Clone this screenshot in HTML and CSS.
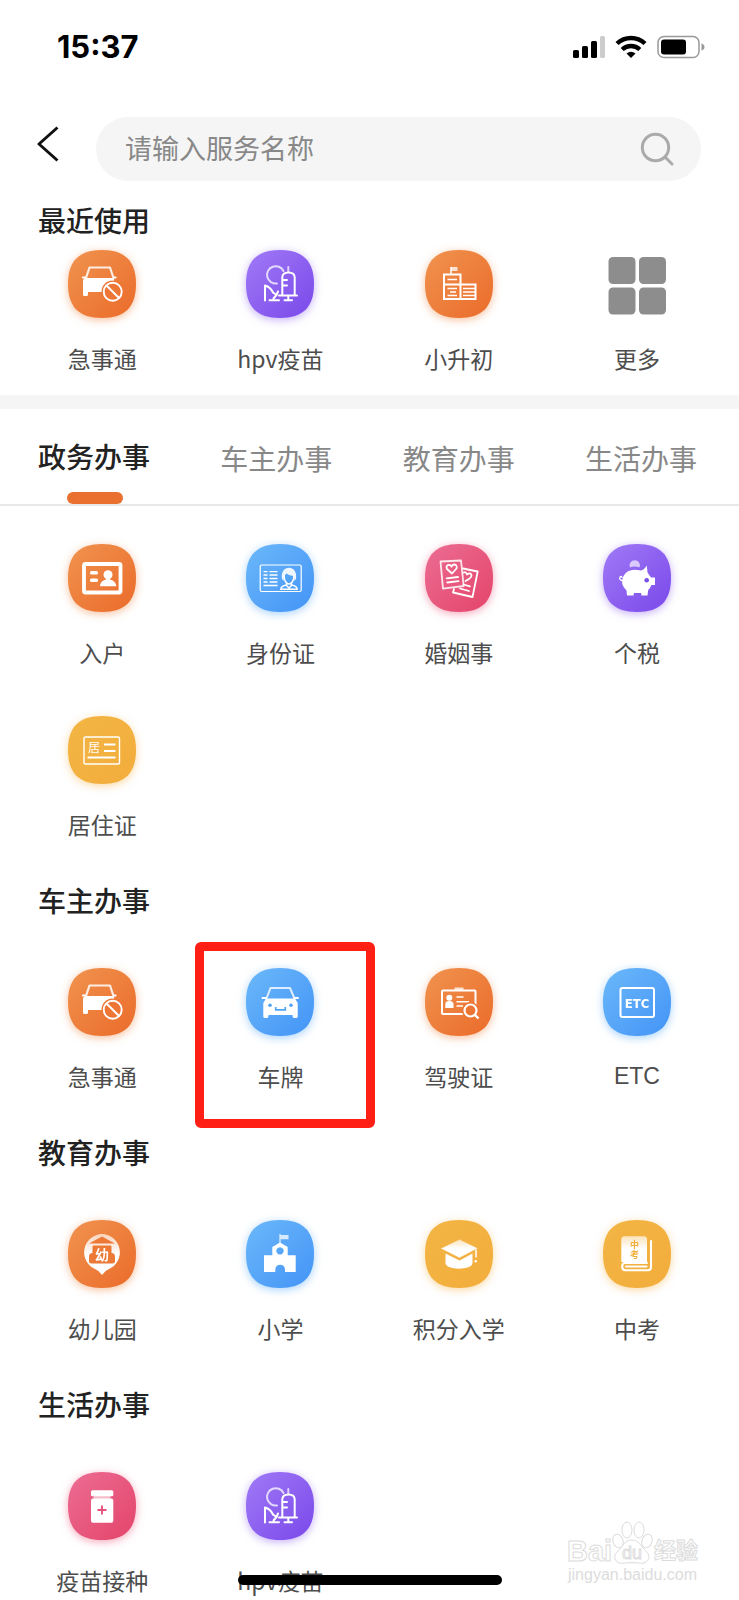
FILE: index.html
```
<!DOCTYPE html>
<html lang="zh-CN">
<head>
<meta charset="utf-8">
<meta name="viewport" content="width=device-width, initial-scale=1">
<title>服务</title>
<link rel="stylesheet" href="styles.css">
</head>
<body>
<svg class="defs" width="0" height="0" aria-hidden="true">
  <defs>
    <linearGradient id="g-orange" x1="0" y1="0" x2="1" y2="1"><stop offset="0" stop-color="#f0934f"/><stop offset="1" stop-color="#eb6b2a"/></linearGradient>
    <linearGradient id="g-purple" x1="0" y1="0" x2="1" y2="1"><stop offset="0" stop-color="#a07af6"/><stop offset="1" stop-color="#7a48ea"/></linearGradient>
    <linearGradient id="g-blue" x1="0" y1="0" x2="1" y2="1"><stop offset="0" stop-color="#6bb8f9"/><stop offset="1" stop-color="#4394f7"/></linearGradient>
    <linearGradient id="g-pink" x1="0" y1="0" x2="1" y2="1"><stop offset="0" stop-color="#ec6d93"/><stop offset="1" stop-color="#e4446a"/></linearGradient>
    <linearGradient id="g-yellow" x1="0" y1="0" x2="1" y2="1"><stop offset="0" stop-color="#f2b545"/><stop offset="1" stop-color="#f3ad3b"/></linearGradient>
    <linearGradient id="g-fade" x1="0" y1="0" x2="0" y2="1"><stop offset="0" stop-color="#fff" stop-opacity=".65"/><stop offset=".5" stop-color="#fff"/></linearGradient>
    <path id="tile" d="M34 0C57 0 68 11 68 34S57 68 34 68 0 57 0 34 11 0 34 0Z"/>
    <symbol id="i-ban" viewBox="0 0 68 68">
      <use href="#tile" fill="url(#g-orange)"/>
      <path d="M18 28L21.500 17.500H42L45.500 28" fill="none" stroke="#fff" stroke-opacity=".85" stroke-width="2.200" stroke-linejoin="round"/>
      <path d="M15 27.500H17M46 27.500H47.500" stroke="#fff" stroke-width="2.200" stroke-linecap="round"/>
      <path d="M17 28H46L47 42H20V44.500Q20 46 18.500 46H16.500Q15 46 15 44.500V30Z" fill="#fff"/>
      <circle cx="44.700" cy="41.700" r="11.200" fill="#ed7636"/>
      <circle cx="44.700" cy="41.700" r="9" fill="none" stroke="#fff" stroke-width="1.900"/>
      <path d="M38.500 35.500L51 48" stroke="#fff" stroke-width="1.900"/>
    </symbol>
    <symbol id="i-hpv" viewBox="0 0 68 68">
      <use href="#tile" fill="url(#g-purple)"/>
      <g fill="none" stroke="#fff" stroke-width="2" stroke-linecap="round" stroke-linejoin="round">
        <path d="M37.500 21A8.700 8.700 0 1 0 31 33.500" stroke-opacity=".75"/>
        <path d="M42.300 17V22" stroke-opacity=".7"/>
        <path d="M36.300 45V27.500Q36.300 22.500 42.500 22.500T48.700 27.500V45M36.300 30H41M36.300 35.500H41M33 45.500H51M42.300 46V50M38.500 50.300H46M19 50.500V35.500Q24.500 37 27 42.500L30.500 45 32 41.500M30.500 45L27.500 48.500M23.500 50.300H33"/>
      </g>
    </symbol>
  </defs>
</svg>

<div class="statusbar">
  <time class="clock">15:37</time>
  <div class="signals">
    <svg width="32" height="24" viewBox="0 0 32 24" role="img" aria-label="信号"><g fill="#000"><rect x="0" y="15" width="6" height="8" rx="1.500"/><rect x="9" y="11" width="6" height="12" rx="1.500"/><rect x="18" y="6" width="6" height="17" rx="1.500"/><rect x="27" y="1" width="5" height="22" rx="1.500" fill="#ccc"/></g></svg>
    <svg width="32" height="24" viewBox="0 0 32 24" role="img" aria-label="无线网络"><g fill="none" stroke="#000" stroke-width="4.400"><path d="M2 8.500A20.500 20.500 0 0 1 30 8.500"/><path d="M7.200 14.500A13 13 0 0 1 24.800 14.500"/></g><path d="M11.500 18.500Q16 15 20.500 18.500L16 23Z"/></svg>
    <svg width="48" height="24" viewBox="0 0 48 24" role="img" aria-label="电量"><rect x="1" y="1.500" width="41" height="21" rx="6" fill="none" stroke="#999" stroke-width="1.500"/><rect x="4" y="4.500" width="25" height="15" rx="3"/><path d="M44.500 8.500Q47.500 9.500 47.500 12T44.500 15.500Z" fill="#999"/></svg>
  </div>
</div>

<header class="topbar">
  <button class="back" type="button" aria-label="返回"><svg width="22" height="38" viewBox="0 0 22 38"><path d="M20.500 2.500L2 19 20.500 35.500" fill="none" stroke="#111" stroke-width="3" stroke-linejoin="round"/></svg></button>
  <form class="search" role="search">
    <input type="text" aria-label="请输入服务名称" placeholder="请输入服务名称">
    <button type="button" aria-label="搜索"><svg width="34" height="34" viewBox="0 0 34 34"><g fill="none" stroke="#aaa" stroke-width="3" stroke-linecap="round"><circle cx="15.500" cy="15.500" r="13.200"/><path d="M26 26L32 32"/></g></svg></button>
  </form>
</header>

<main>
  <section class="recent">
    <h2>最近使用</h2>
    <nav class="grid">
      <a class="item orange" href="#"><svg class="icon"><use href="#i-ban"/></svg><span>急事通</span></a>
      <a class="item purple" href="#"><svg class="icon"><use href="#i-hpv"/></svg><span>hpv疫苗</span></a>
      <a class="item orange" href="#"><svg class="icon" viewBox="0 0 68 68"><use href="#tile" fill="url(#g-orange)"/><g fill="none" stroke="#fff" stroke-width="2"><path d="M19 24.500H35.500V49H19ZM35.500 34.500H50.500V49H35.500M19 34.500H35.500"/><path d="M22.500 29.500H32M22.500 38.500H32M25 42H31M22.500 45.500H32M38 38.500H50M38 42H50M38 45.500H50" stroke-width="1.600"/><path d="M26 24V17" stroke-opacity=".75"/></g><path d="M26 17H32.500V21H26Z" fill="#fff" opacity=".75"/></svg><span>小升初</span></a>
      <a class="item" href="#"><svg class="icon" viewBox="0 0 68 68" fill="#8d8d8d"><rect x="5.500" y="7" width="27" height="27" rx="4.500"/><rect x="36" y="7" width="27" height="27" rx="4.500"/><rect x="5.500" y="37.500" width="27" height="27" rx="4.500"/><rect x="36" y="37.500" width="27" height="27" rx="4.500"/></svg><span>更多</span></a>
    </nav>
  </section>

  <div class="tabs" role="tablist">
    <button type="button" role="tab" aria-selected="true">政务办事</button>
    <button type="button" role="tab" aria-selected="false">车主办事</button>
    <button type="button" role="tab" aria-selected="false">教育办事</button>
    <button type="button" role="tab" aria-selected="false">生活办事</button>
  </div>

  <div class="services">
  <section>
    <nav class="grid">
      <a class="item orange" href="#"><svg class="icon" viewBox="0 0 68 68"><use href="#tile" fill="url(#g-orange)"/><rect x="16" y="20" width="36.500" height="28.500" rx="1.500" fill="none" stroke="#fff" stroke-width="3.800"/><g fill="#fff"><rect x="22" y="27" width="8" height="3.500" rx="1.500"/><rect x="22" y="34.500" width="8" height="3.500" rx="1.500"/><circle cx="40" cy="30.700" r="4.500"/><path d="M38 33H42V35.500Q48 37 48.300 42.300H32Q32 37 38 35.500Z"/></g></svg><span>入户</span></a>
      <a class="item blue" href="#"><svg class="icon" viewBox="0 0 68 68"><use href="#tile" fill="url(#g-blue)"/><g fill="none" stroke="#fff"><rect x="14.200" y="21" width="41" height="26.500" rx="1.500" stroke-width="1.200"/><path d="M17.500 27.700H21.500M23.500 27.700H31.500M17.500 31H21.500M23.500 31H31.500M17.500 34.500H21.500M23.500 34.500H31.500M17.500 38H21.500M23.500 38H31.500M17.500 41.500H31.500" stroke-width="1.300"/><path d="M38 31C38 43 48 43 48 31M40.500 38V41Q35 42 34.800 45.200H51.200Q51 42 45.500 41V38M40.500 41.500L43 44 45.500 41.500" stroke-width="1.500"/></g><path d="M36 35C33.500 20 52.500 20 50 35L48.500 37 48 32Q43 31.500 40.500 29.500L38 32 37.500 37Z" fill="#fff" opacity=".9"/></svg><span>身份证</span></a>
      <a class="item pink" href="#"><svg class="icon" viewBox="0 0 68 68"><use href="#tile" fill="url(#g-pink)"/><g fill="none" stroke="#fff" stroke-width="1.800" stroke-linejoin="round" stroke-linecap="round"><path d="M15.500 17.500L36 16.500 38.700 42 18 44.700Z" stroke-opacity=".85"/><path d="M38 24.500L52.700 27.500 47.500 53 28 48.500 29 45M21.700 34.300L33 33M22.200 38.500L33.500 37.200M38.500 40.500L45 42.300M35 44.500L44 47"/><path d="M27 29.500L22 25C20 21 25 19.500 26.500 22.700 28 19 33 20.500 31.500 24.500Z"/><path d="M38.500 28.500Q41 27.500 42 30.500 46 28 46.500 31.500 46.500 34 40.500 37"/></g></svg><span>婚姻事</span></a>
      <a class="item purple" href="#"><svg class="icon" viewBox="0 0 68 68"><use href="#tile" fill="url(#g-purple)"/><path d="M27 23.500A5.200 5.200 0 1 1 36.500 23.500Q31.500 21.500 27 23.500Z" fill="#fff" opacity=".65"/><path d="M38 26.500Q41 26 43.800 21.500L44.500 28.500 48 33.500H52V41H48.500Q47 44.500 45.200 46L44.500 51.500H38.500L38 49H31L30.500 51.500H24L23.500 46.500Q16.500 40 20.500 32 25 23.500 38 26.500Z" fill="#fff"/><path d="M20.500 37Q15.500 36 17 33 19 31.500 19 34" fill="none" stroke="#fff" stroke-width="1.300"/><circle cx="43.700" cy="36.300" r="2.300" fill="#7750e8"/></svg><span>个税</span></a>
      <a class="item yellow" href="#"><svg class="icon" viewBox="0 0 68 68"><use href="#tile" fill="url(#g-yellow)"/><rect x="16" y="21" width="35.500" height="27" rx="1.500" fill="none" stroke="#fff" stroke-width="1.400"/><path d="M36 28.500H47.500M36 35H47.500M19.500 41.500H47.500" stroke="#fff" stroke-width="1.800"/><text x="26" y="35.500" class="glyph glyph-residence">居</text></svg><span>居住证</span></a>
    </nav>
  </section>

  <section>
    <h2>车主办事</h2>
    <nav class="grid">
      <a class="item orange" href="#"><svg class="icon"><use href="#i-ban"/></svg><span>急事通</span></a>
      <a class="item blue marked" href="#"><svg class="icon" viewBox="0 0 68 68"><use href="#tile" fill="url(#g-blue)"/><path d="M20.500 30.500L24.500 20H44L48.500 30.500" fill="none" stroke="#fff" stroke-opacity=".8" stroke-width="2" stroke-linejoin="round"/><path d="M16.500 30H20M48.500 30H52" stroke="#fff" stroke-width="2" stroke-linecap="round"/><path d="M20 30.500H49L51.700 35V48.500Q51.700 50 50 50H48Q46.500 50 46.500 47H22.500Q22.500 50 21 50H19Q17.300 50 17.300 48.500V35Z" fill="#fff"/><g fill="#52a2f6"><circle cx="24" cy="37.300" r="1.800"/><circle cx="45" cy="37.300" r="1.800"/></g><path d="M29.700 39V41.800H39.300V39" fill="none" stroke="#52a2f6" stroke-width="1.700"/></svg><span>车牌</span></a>
      <a class="item orange" href="#"><svg class="icon" viewBox="0 0 68 68"><use href="#tile" fill="url(#g-orange)"/><rect x="17" y="22.500" width="33.500" height="23.500" rx="1" fill="none" stroke="#fff" stroke-width="2"/><path d="M29.500 19.500H38.500V22H29.500Z" fill="#fff" opacity=".75"/><g fill="#fff"><circle cx="24.300" cy="29.700" r="3"/><path d="M20.300 40V36Q20.300 33 24.300 33T28.500 36V40Z"/></g><path d="M31.500 29H38.500M31.500 33.700H44M31.500 38H38" stroke="#fff" stroke-width="1.600"/><circle cx="45.500" cy="42.500" r="8.500" fill="#ec7533"/><circle cx="45.500" cy="42.500" r="6" fill="none" stroke="#fff" stroke-width="2.200"/><path d="M50 47L53.500 50.500" stroke="#fff" stroke-width="2.400"/></svg><span>驾驶证</span></a>
      <a class="item blue" href="#"><svg class="icon" viewBox="0 0 68 68"><use href="#tile" fill="url(#g-blue)"/><rect x="17.500" y="20" width="33.500" height="29" rx="2" fill="none" stroke="#fff" stroke-width="2"/><text x="34" y="39.500" class="glyph glyph-etc">ETC</text></svg><span class="latin">ETC</span></a>
    </nav>
  </section>

  <section>
    <h2>教育办事</h2>
    <nav class="grid">
      <a class="item orange" href="#"><svg class="icon" viewBox="0 0 68 68"><use href="#tile" fill="url(#g-orange)"/><path d="M34 14A18.300 18.300 0 0 1 41 49Q37 50.500 34 55 31 50.500 27 49A18.300 18.300 0 0 1 34 14Z" fill="url(#g-fade)"/><path d="M21 23.500L34 16.500 47 23.500ZM24.500 26.500Q24.500 25.500 25.500 25.500H42.500Q43.500 25.500 43.500 26.500V33Q47 33 47 37V41Q47 43.500 44.500 43.500H23.500Q21 43.500 21 41V37Q21 33 24.500 33Z" fill="#ed7936"/><text x="34" y="39.500" class="glyph glyph-young">幼</text></svg><span>幼儿园</span></a>
      <a class="item blue" href="#"><svg class="icon" viewBox="0 0 68 68"><use href="#tile" fill="url(#g-blue)"/><path d="M33.300 14H34.700V15H42.500V19.200H34.700V24H33.300Z" fill="#fff" opacity=".75"/><path fill-rule="evenodd" d="M34 22.500L41.700 27V35.300H49.700V52H39V49.500A4.800 4.800 0 0 0 29.300 49.500V52H18V35.300H26.300V27ZM34 27.200A3.700 3.700 0 1 0 34.010 27.200Z" fill="#fff"/></svg><span>小学</span></a>
      <a class="item yellow" href="#"><svg class="icon" viewBox="0 0 68 68"><use href="#tile" fill="url(#g-yellow)"/><path d="M20.500 33.500L34.500 40.500 47.500 33.500V43C47.500 50.500 20.500 50.500 20.500 43Z" fill="#fff"/><path d="M15.500 28.500L34.500 19.300 53 28.300 34.500 38Z" fill="url(#g-fade)" stroke="#f2b040" stroke-width=".6"/><path d="M51 29.500V37.500" stroke="#fff" stroke-width="1.500"/><circle cx="50.700" cy="41.300" r="1.200" fill="#fff"/></svg><span>积分入学</span></a>
      <a class="item yellow" href="#"><svg class="icon" viewBox="0 0 68 68"><use href="#tile" fill="url(#g-yellow)"/><path d="M21.500 16.300H41Q44 16.300 44 19.300V42H18.300V19.500Q18.300 16.300 21.500 16.300Z" fill="url(#g-fade)"/><path d="M44 43H22Q19.200 43 19.200 46.500T22 50.300H45Q48 50.300 48 47V21M23 46.500H43.500" fill="none" stroke="#fff" stroke-width="2.100" stroke-linecap="round"/><g class="glyph glyph-exam"><text x="31.500" y="28">中</text><text x="31.500" y="38">考</text></g></svg><span>中考</span></a>
    </nav>
  </section>

  <section>
    <h2>生活办事</h2>
    <nav class="grid">
      <a class="item pink" href="#"><svg class="icon" viewBox="0 0 68 68"><use href="#tile" fill="url(#g-pink)"/><rect x="25.500" y="23" width="17" height="4" fill="#fff" opacity=".6"/><g fill="#fff"><rect x="23" y="18.300" width="22.300" height="6" rx="1.500"/><rect x="23" y="26.500" width="22.300" height="24.300" rx="2"/></g><path d="M34 33.500V42.500M29.500 38H38.500" stroke="#e6527a" stroke-width="1.900"/></svg><span>疫苗接种</span></a>
      <a class="item purple" href="#"><svg class="icon"><use href="#i-hpv"/></svg><span>hpv疫苗</span></a>
    </nav>
  </section>
  </div>
</main>

<svg class="watermark" width="134" height="66" viewBox="0 0 134 66" aria-hidden="true">
  <g fill="#fff" stroke="#dcdcdc" stroke-width="1">
    <text x="0" y="41" class="wm-name">Bai</text>
    <ellipse cx="51" cy="21" rx="5" ry="7" transform="rotate(-20 51 21)"/>
    <ellipse cx="60" cy="10" rx="5" ry="8"/>
    <ellipse cx="72" cy="10" rx="5" ry="8"/>
    <ellipse cx="80" cy="21" rx="5" ry="7" transform="rotate(20 80 21)"/>
    <path d="M65 20C72 20 74 27 79 31 86 38 79 45 72 43Q65 42 58 43C49 45 44 37 51 31 56 27 57 20 65 20Z"/>
    <text x="55" y="39" class="wm-du">du</text>
    <text x="87" y="38" class="wm-cn">经验</text>
  </g>
  <text x="1" y="60" class="wm-url">jingyan.baidu.com</text>
</svg>
<div class="home-indicator"></div>
</body>
</html>
```
FILE: styles.css
```
*, *::after { box-sizing: border-box; }

body {
  position: relative;
  margin: 0;
  background: #fff;
  color: #222;
  font-family: "Noto Sans CJK SC", "Noto Sans", sans-serif;
}

button, input { font: inherit; color: inherit; border: 0; padding: 0; background: none; }
button { cursor: pointer; }
svg { display: block; flex: none; }
.defs { position: absolute; }

.statusbar {
  display: flex;
  justify-content: space-between;
  align-items: center;
  height: 94px;
  padding: 0 34px 0 57px;
}
.clock { font: 700 31px/32px Inter, sans-serif; color: #000; }
.signals { display: flex; align-items: center; gap: 10px; }

.topbar {
  display: flex;
  align-items: center;
  gap: 37px;
  margin-top: 23px;
  padding: 0 38px 0 37px;
}
.back { margin-bottom: 10px; }
.search {
  display: flex;
  flex: 1;
  align-items: center;
  height: 64px;
  padding: 0 27px 0 29px;
  border-radius: 32px;
  background: #f5f5f5;
}
.search input { flex: 1; min-width: 0; height: 40px; padding-bottom: 3px; font-size: 27px; outline: 0; }
.search input::placeholder { color: #888; opacity: 1; }

h2 { margin: 0 0 48px; padding: 0 38px; font-size: 28px; line-height: 40px; font-weight: 500; }

.recent { padding: 19px 0 21px; border-bottom: 14px solid #f5f5f5; }
.recent h2 { margin-bottom: 10px; }

.grid {
  display: grid;
  grid-template-columns: repeat(4, 1fr);
  row-gap: 48px;
  padding: 0 13px;
}
.item {
  position: relative;
  display: flex;
  flex-direction: column;
  align-items: center;
  gap: 24px;
  color: #4d4d4d;
  font-size: 23px;
  line-height: 32px;
  text-decoration: none;
}
.icon { width: 68px; height: 68px; overflow: visible; }
.orange .icon { filter: drop-shadow(0 2px 4px rgba(240, 130, 60, .5)); }
.purple .icon { filter: drop-shadow(0 2px 4px rgba(140, 95, 240, .5)); }
.blue .icon { filter: drop-shadow(0 2px 4px rgba(80, 165, 250, .5)); }
.pink .icon { filter: drop-shadow(0 2px 4px rgba(235, 80, 120, .5)); }
.yellow .icon { filter: drop-shadow(0 2px 4px rgba(245, 180, 70, .5)); }
.latin { font-family: "Liberation Sans", sans-serif; }

.marked::after {
  content: "";
  position: absolute;
  top: -26px;
  left: 4px;
  width: 180px;
  height: 186px;
  border: 9px solid #ff1f14;
  border-radius: 6px;
}

.tabs {
  display: flex;
  justify-content: space-between;
  height: 97px;
  padding: 0 42px 0 38px;
  border-bottom: 2px solid #e8e8e8;
}
.tabs button { position: relative; font-size: 28px; line-height: 40px; color: #888; padding-top: 3px; }
.tabs button[aria-selected="true"] { color: #222; font-weight: 500; padding: 0 0 2px; }
.tabs button[aria-selected="true"]::after {
  content: "";
  position: absolute;
  bottom: 0;
  left: 29px;
  width: 56px;
  height: 12px;
  border-radius: 6px;
  background: #ea7030;
}

.services { display: flex; flex-direction: column; gap: 40px; padding: 38px 0 4px; }

.glyph { text-anchor: middle; fill: #fff; }
.glyph-residence { font-size: 12px; }
.glyph-etc { font: 700 13px "Liberation Sans Narrow", "DejaVu Sans Condensed", sans-serif; }
.glyph-young { font-size: 14px; font-weight: 700; }
.glyph-exam { font-size: 9px; font-weight: 700; fill: #f2ae3e; }

.watermark { position: absolute; right: 38px; bottom: 14px; }
.wm-name { font: 700 29px "Liberation Sans", sans-serif; }
.wm-du { font: 18px "Liberation Sans", sans-serif; }
.wm-cn { font-size: 22px; font-weight: 700; }
.wm-url { font: 16px "Liberation Sans", sans-serif; fill: #dcdcdc; }

.home-indicator {
  position: fixed;
  bottom: 15px;
  left: 50%;
  width: 264px;
  height: 10px;
  margin-left: -132px;
  border-radius: 5px;
  background: #000;
}
```
